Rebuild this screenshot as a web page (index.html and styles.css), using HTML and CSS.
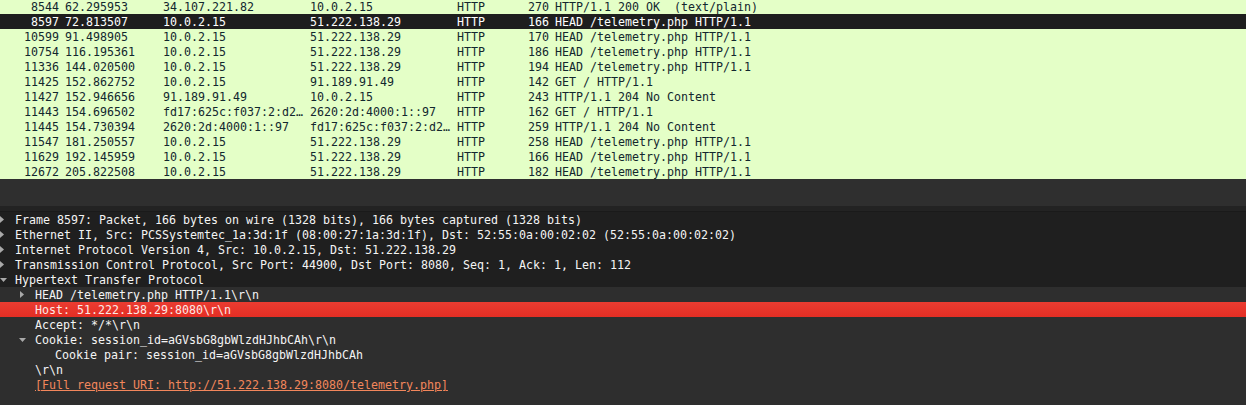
FILE: index.html
```html
<!DOCTYPE html>
<html lang="en">
<head>
<meta charset="utf-8">
<title>Packets</title>
<link rel="stylesheet" href="styles.css">
</head>
<body>
<div class="app">
  <div class="list">
    <div class="row"><span class="no">8544</span><span>62.295953</span><span>34.107.221.82</span><span>10.0.2.15</span><span>HTTP</span><span class="len">270</span><span>HTTP/1.1 200 OK  (text/plain)</span></div>
    <div class="row sel"><span class="no">8597</span><span>72.813507</span><span>10.0.2.15</span><span>51.222.138.29</span><span>HTTP</span><span class="len">166</span><span>HEAD /telemetry.php HTTP/1.1</span></div>
    <div class="row"><span class="no">10599</span><span>91.498905</span><span>10.0.2.15</span><span>51.222.138.29</span><span>HTTP</span><span class="len">170</span><span>HEAD /telemetry.php HTTP/1.1</span></div>
    <div class="row"><span class="no">10754</span><span>116.195361</span><span>10.0.2.15</span><span>51.222.138.29</span><span>HTTP</span><span class="len">186</span><span>HEAD /telemetry.php HTTP/1.1</span></div>
    <div class="row"><span class="no">11336</span><span>144.020500</span><span>10.0.2.15</span><span>51.222.138.29</span><span>HTTP</span><span class="len">194</span><span>HEAD /telemetry.php HTTP/1.1</span></div>
    <div class="row"><span class="no">11425</span><span>152.862752</span><span>10.0.2.15</span><span>91.189.91.49</span><span>HTTP</span><span class="len">142</span><span>GET / HTTP/1.1</span></div>
    <div class="row"><span class="no">11427</span><span>152.946656</span><span>91.189.91.49</span><span>10.0.2.15</span><span>HTTP</span><span class="len">243</span><span>HTTP/1.1 204 No Content</span></div>
    <div class="row"><span class="no">11443</span><span>154.696502</span><span>fd17:625c:f037:2:d2…</span><span>2620:2d:4000:1::97</span><span>HTTP</span><span class="len">162</span><span>GET / HTTP/1.1</span></div>
    <div class="row"><span class="no">11445</span><span>154.730394</span><span>2620:2d:4000:1::97</span><span>fd17:625c:f037:2:d2…</span><span>HTTP</span><span class="len">259</span><span>HTTP/1.1 204 No Content</span></div>
    <div class="row"><span class="no">11547</span><span>181.250557</span><span>10.0.2.15</span><span>51.222.138.29</span><span>HTTP</span><span class="len">258</span><span>HEAD /telemetry.php HTTP/1.1</span></div>
    <div class="row"><span class="no">11629</span><span>192.145959</span><span>10.0.2.15</span><span>51.222.138.29</span><span>HTTP</span><span class="len">166</span><span>HEAD /telemetry.php HTTP/1.1</span></div>
    <div class="row"><span class="no">12672</span><span>205.822508</span><span>10.0.2.15</span><span>51.222.138.29</span><span>HTTP</span><span class="len">182</span><span>HEAD /telemetry.php HTTP/1.1</span></div>
  </div>
  <div class="splitter"></div>
  <div class="pane-top"></div>
  <div class="details">
    <div class="item"><span class="arrow"><svg width="5" height="7" viewBox="0 0 5 7"><polygon points="0,0 4,3.5 0,7"/></svg></span><span>Frame 8597: Packet, 166 bytes on wire (1328 bits), 166 bytes captured (1328 bits)</span></div>
    <div class="item"><span class="arrow"><svg width="5" height="7" viewBox="0 0 5 7"><polygon points="0,0 4,3.5 0,7"/></svg></span><span>Ethernet II, Src: PCSSystemtec_1a:3d:1f (08:00:27:1a:3d:1f), Dst: 52:55:0a:00:02:02 (52:55:0a:00:02:02)</span></div>
    <div class="item"><span class="arrow"><svg width="5" height="7" viewBox="0 0 5 7"><polygon points="0,0 4,3.5 0,7"/></svg></span><span>Internet Protocol Version 4, Src: 10.0.2.15, Dst: 51.222.138.29</span></div>
    <div class="item"><span class="arrow"><svg width="5" height="7" viewBox="0 0 5 7"><polygon points="0,0 4,3.5 0,7"/></svg></span><span>Transmission Control Protocol, Src Port: 44900, Dst Port: 8080, Seq: 1, Ack: 1, Len: 112</span></div>
    <div class="item"><span class="arrow"><svg width="7" height="4" viewBox="0 0 7 4"><polygon points="0,0 7,0 3.5,4"/></svg></span><span>Hypertext Transfer Protocol</span></div>
    <div class="subtree">
      <div class="item l1"><span class="arrow"><svg width="5" height="7" viewBox="0 0 5 7"><polygon points="0,0 4,3.5 0,7"/></svg></span><span>HEAD /telemetry.php HTTP/1.1\r\n</span></div>
      <div class="item l1 error"><span class="arrow"></span><span>Host: 51.222.138.29:8080\r\n</span></div>
      <div class="item l1"><span class="arrow"></span><span>Accept: */*\r\n</span></div>
      <div class="item l1"><span class="arrow down"><svg width="7" height="4" viewBox="0 0 7 4"><polygon points="0,0 7,0 3.5,4"/></svg></span><span>Cookie: session_id=aGVsbG8gbWlzdHJhbCAh\r\n</span></div>
      <div class="item l2"><span class="arrow"></span><span>Cookie pair: session_id=aGVsbG8gbWlzdHJhbCAh</span></div>
      <div class="item l1"><span class="arrow"></span><span>\r\n</span></div>
      <div class="item l1"><span class="arrow"></span><span class="link">[Full request URI: http://51.222.138.29:8080/telemetry.php]</span></div>
    </div>
  </div>
</div>
</body>
</html>
```
FILE: styles.css
```css
html, body {
  margin: 0;
  padding: 0;
  background: #2e2e2e;
}
body {
  width: 1246px;
  height: 405px;
  overflow: hidden;
  font-family: "DejaVu Sans Mono", "Liberation Mono", monospace;
  font-size: 11.63px;
}
.app {
  display: flex;
  flex-direction: column;
  height: 405px;
}
.list {
  background: #e4ffc7;
  color: #12272e;
  height: 179px;
  overflow: hidden;
  display: flex;
  flex-direction: column;
}
.row {
  display: grid;
  grid-template-columns: 65px 98px 147px 147px 63px 35px 1fr;
  box-sizing: border-box;
  height: 15px;
  padding-top: 1px;
  line-height: 14px;
  white-space: pre;
  flex: none;
}
.row:first-child {
  margin-top: -1px;
}
.row .no,
.row .len {
  text-align: right;
  padding-right: 6px;
}
.row.sel {
  background: #1e1e1e;
  color: #ffffff;
}
.splitter {
  height: 27px;
  background: #2f2f2f;
  flex: none;
}
.pane-top {
  height: 5px;
  background: #232323;
  border-bottom: 1px solid #1a1a1a;
  flex: none;
}
.details {
  flex: 1;
  display: flex;
  flex-direction: column;
  background: #1f1f1f;
  color: #f4f4f4;
}
.item {
  display: flex;
  align-items: center;
  box-sizing: border-box;
  height: 15px;
  padding-top: 1px;
  line-height: 14px;
  white-space: pre;
  flex: none;
}
.item.l1 { padding-left: 20px; }
.item.l2 { padding-left: 40px; }
.arrow {
  width: 15px;
  height: 14px;
  flex: none;
  display: flex;
  align-items: center;
}
.arrow svg {
  display: block;
  fill: #a9a9a9;
  margin-top: -1px;
}
.arrow.down svg {
  margin-left: -1px;
}
.subtree {
  flex: 1;
  background: #2e2e2e;
}
.item.error {
  background: linear-gradient(#eb3c31, #e32e24);
  color: #fde9e6;
}
.link {
  color: #f3875c;
  text-decoration: underline;
}
```
